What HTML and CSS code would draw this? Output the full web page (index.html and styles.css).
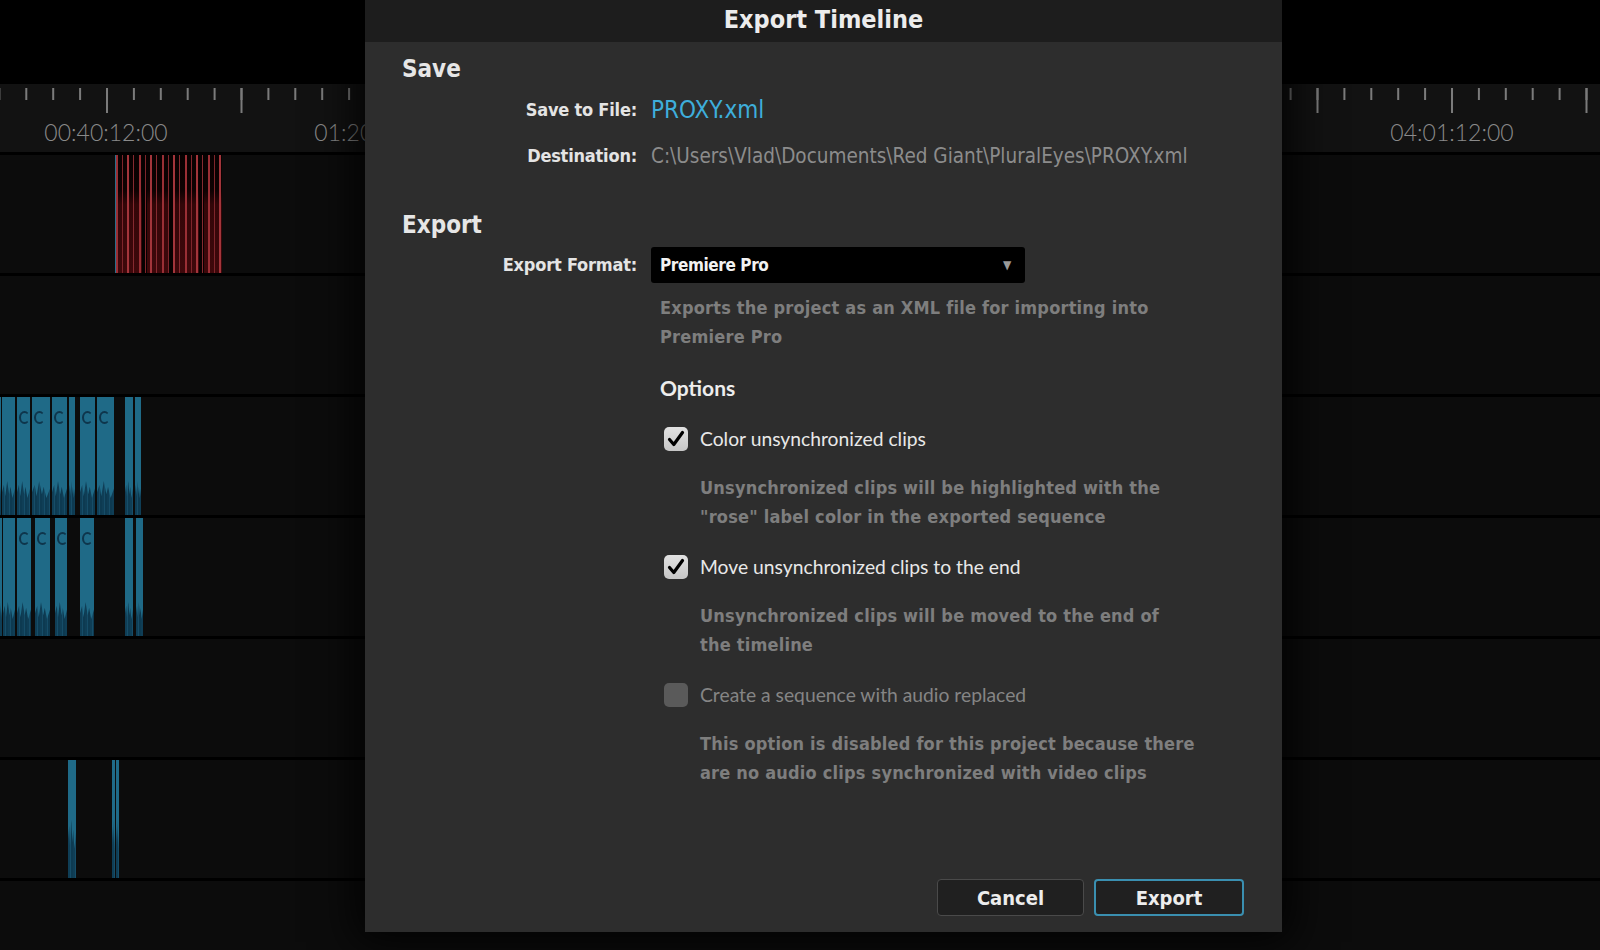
FILE: index.html
```html
<!DOCTYPE html>
<html lang="en">
<head>
    <meta charset="UTF-8">
    <title>Export Timeline</title>
    <link rel="stylesheet" href="styles.css">
</head>
<body>
    <div class="screen">
        <div class="timeline">
            <div class="topbar"></div>
            <div class="ruler">
                <svg class="ticks" width="1600" height="30">
                    <defs>
                        <pattern id="minor" x="-1.6" y="0" width="26.9" height="30" patternUnits="userSpaceOnUse">
                            <rect width="2" height="12" fill="#7b7b7b"/>
                        </pattern>
                        <pattern id="major" x="106" y="0" width="134.5" height="30" patternUnits="userSpaceOnUse">
                            <rect width="2" height="25" fill="#7b7b7b"/>
                        </pattern>
                    </defs>
                    <rect width="1600" height="30" fill="url(#minor)"/>
                    <rect width="1600" height="30" fill="url(#major)"/>
                </svg>
                <span class="timecode" style="left:106px">00:40:12:00</span>
                <span class="timecode" style="left:376px">01:20:12:00</span>
                <span class="timecode" style="left:1452px">04:01:12:00</span>
            </div>
            <div class="tracks">
                <div class="track">
                    <div class="clip red" style="left:115px;width:107px"></div>
                </div>
                <div class="track"></div>
                <div class="track">
                    <div class="clip blue" style="left:0;width:1px"></div>
                    <div class="clip blue" style="left:2px;width:13px"></div>
                    <div class="clip blue" style="left:17px;width:13px"><span class="ring"></span></div>
                    <div class="clip blue" style="left:32px;width:18px"><span class="ring"></span></div>
                    <div class="clip blue" style="left:52px;width:15px"><span class="ring"></span></div>
                    <div class="clip blue" style="left:69px;width:6px"></div>
                    <div class="clip blue" style="left:80px;width:15px"><span class="ring"></span></div>
                    <div class="clip blue" style="left:97px;width:17px"><span class="ring"></span></div>
                    <div class="clip blue" style="left:125px;width:8px"></div>
                    <div class="clip blue" style="left:135px;width:6px"></div>
                </div>
                <div class="track">
                    <div class="clip blue" style="left:0;width:2px"></div>
                    <div class="clip blue" style="left:3px;width:12px"></div>
                    <div class="clip blue" style="left:17px;width:14px"><span class="ring"></span></div>
                    <div class="clip blue" style="left:35px;width:15px"><span class="ring"></span></div>
                    <div class="clip blue" style="left:55px;width:12px"><span class="ring"></span></div>
                    <div class="clip blue" style="left:80px;width:14px"><span class="ring"></span></div>
                    <div class="clip blue" style="left:125px;width:8px"></div>
                    <div class="clip blue" style="left:136px;width:7px"></div>
                </div>
                <div class="track"></div>
                <div class="track">
                    <div class="clip blue thin" style="left:68px;width:8px"></div>
                    <div class="clip blue thin" style="left:112px;width:3px"></div>
                    <div class="clip blue thin" style="left:116px;width:3px"></div>
                </div>
                <div class="track"></div>
            </div>
        </div>

        <div class="dialog">
            <div class="dialog-title">Export Timeline</div>
            <div class="dialog-body">
                <h2 class="section-title">Save</h2>
                <div class="field file">
                    <span class="field-label">Save to File:</span>
                    <span class="file-name">PROXY.xml</span>
                </div>
                <div class="field dest">
                    <span class="field-label">Destination:</span>
                    <span class="path">C:\Users\Vlad\Documents\Red Giant\PluralEyes\PROXY.xml</span>
                </div>

                <h2 class="section-title export">Export</h2>
                <div class="field format">
                    <span class="field-label">Export Format:</span>
                    <div class="select">
                        <span>Premiere Pro</span>
                        <span class="select-arrow">&#9660;</span>
                    </div>
                </div>

                <div class="format-details">
                    <p class="hint">Exports the project as an XML file for importing into<br>Premiere Pro</p>

                    <h3 class="options-title">Options</h3>

                    <label class="option">
                        <span class="checkbox checked">
                            <svg width="24" height="24" viewBox="0 0 24 24"><path d="M5.5 12.5 L9.8 17.5 L18.5 5.5" fill="none" stroke="#000" stroke-width="3.2" stroke-linecap="round" stroke-linejoin="round"/></svg>
                        </span>
                        <span class="option-label">Color unsynchronized clips</span>
                    </label>
                    <p class="hint option-hint">Unsynchronized clips will be highlighted with the<br>"rose" label color in the exported sequence</p>

                    <label class="option">
                        <span class="checkbox checked">
                            <svg width="24" height="24" viewBox="0 0 24 24"><path d="M5.5 12.5 L9.8 17.5 L18.5 5.5" fill="none" stroke="#000" stroke-width="3.2" stroke-linecap="round" stroke-linejoin="round"/></svg>
                        </span>
                        <span class="option-label">Move unsynchronized clips to the end</span>
                    </label>
                    <p class="hint option-hint">Unsynchronized clips will be moved to the end of<br>the timeline</p>

                    <label class="option disabled">
                        <span class="checkbox"></span>
                        <span class="option-label">Create a sequence with audio replaced</span>
                    </label>
                    <p class="hint option-hint">This option is disabled for this project because there<br>are no audio clips synchronized with video clips</p>
                </div>

                <div class="actions">
                    <button type="button" class="btn btn-cancel">Cancel</button>
                    <button type="button" class="btn btn-export">Export</button>
                </div>
            </div>
        </div>
    </div>
</body>
</html>
```

FILE: styles.css
```css
* {
    margin: 0;
    padding: 0;
    box-sizing: border-box;
}

body {
    background: #000;
    width: 1600px;
    height: 950px;
    overflow: hidden;
    font-family: "Liberation Sans Narrow", "DejaVu Sans Condensed", sans-serif;
}

.screen {
    position: relative;
    width: 1600px;
    height: 950px;
    overflow: hidden;
}

/* timeline behind the dialog */

.topbar {
    height: 84px;
    background: #000;
}

.ruler {
    position: relative;
    height: 68px;
    padding-top: 4px;
    background: #121212;
}

.ruler .ticks {
    display: block;
}

.timecode {
    position: absolute;
    top: 34px;
    transform: translateX(-50%);
    font-family: Lato, sans-serif;
    font-weight: 300;
    font-size: 23px;
    color: #8a8a8a;
    white-space: nowrap;
}

.tracks {
    height: 798px;
    overflow: hidden;
}

.track {
    position: relative;
    height: 121px;
    border-top: 3px solid #000;
    background: #0c0c0c;
}

.clip {
    position: absolute;
    top: 0;
    bottom: 0;
}

.clip.red {
    border-left: 1px solid #2a6f8c;
    background:
        repeating-linear-gradient(90deg, #9a2f35 0 2px, transparent 2px 6px, #7e252b 6px 7px, transparent 7px 11px, #a3353b 11px 13px, transparent 13px 17px, #862a30 17px 18px, transparent 18px 23px),
        repeating-linear-gradient(90deg, transparent 0 26px, #060101 26px 31px, transparent 31px 53px, #080101 53px 57px),
        linear-gradient(to bottom, #080101 0, #0e0202 30%, #330608 42%, #3e080b 100%);
}

.clip.blue {
    background: #1f6a87;
    overflow: hidden;
}

.clip.blue::after {
    content: "";
    position: absolute;
    left: 0;
    right: 0;
    bottom: 0;
    height: 32%;
    background: repeating-linear-gradient(90deg, #0f3e56 0 2px, #164d68 2px 3px, #0d3a51 3px 5px);
    clip-path: polygon(0 40%, 15% 20%, 25% 50%, 40% 10%, 55% 45%, 65% 25%, 80% 55%, 100% 30%, 100% 100%, 0 100%);
}

.clip.thin::after {
    height: 55%;
}

.ring {
    position: absolute;
    top: 14px;
    left: 2px;
    width: 11px;
    height: 13px;
    border: 2px solid #0e354b;
    border-right-color: transparent;
    border-radius: 50%;
}

/* export dialog */

.dialog {
    position: absolute;
    left: 365px;
    top: 0;
    width: 917px;
    height: 932px;
    display: flex;
    flex-direction: column;
    background: #2d2d2d;
    box-shadow: 0 0 40px 10px rgba(0, 0, 0, 0.85);
}

.dialog-title {
    height: 42px;
    line-height: 40px;
    background: #1d1d1d;
    text-align: center;
    font-weight: bold;
    font-size: 25px;
    color: #ececec;
}

.dialog-body {
    flex: 1;
    display: flex;
    flex-direction: column;
    padding: 12px 38px 16px 37px;
}

.section-title {
    font-size: 24px;
    line-height: 30px;
    font-weight: bold;
    color: #e6e6e6;
}

.section-title.export {
    margin-top: 39px;
}

.field {
    display: grid;
    grid-template-columns: 235px 1fr;
    column-gap: 14px;
    align-items: center;
    line-height: 30px;
}

.field.file {
    margin-top: 11px;
}

.field.dest {
    margin-top: 16px;
}

.field.format {
    margin-top: 7px;
}

.field-label {
    text-align: right;
    font-weight: bold;
    font-size: 18px;
    letter-spacing: -0.2px;
    color: #e4e4e4;
}

.file-name {
    font-size: 24px;
    color: #3eaedb;
}

.path {
    font-size: 20.5px;
    color: #8c8c8c;
}

.select {
    width: 374px;
    height: 36px;
    display: flex;
    align-items: center;
    justify-content: space-between;
    padding: 0 14px 0 9px;
    background: #000;
    border-radius: 3px;
    font-weight: bold;
    font-size: 17px;
    letter-spacing: -0.4px;
    color: #f2f2f2;
}

.select-arrow {
    font-size: 12px;
    color: #9a9a9a;
}

.format-details {
    margin-left: 258px;
}

.hint {
    margin-top: 11px;
    font-weight: bold;
    font-size: 18px;
    line-height: 28.5px;
    letter-spacing: 0.2px;
    white-space: nowrap;
    color: #7e7e7e;
}

.options-title {
    margin-top: 22px;
    font-family: Lato, sans-serif;
    font-size: 21px;
    line-height: 30px;
    font-weight: bold;
    color: #ededed;
}

.option {
    display: flex;
    align-items: center;
    gap: 12px;
    margin-top: 21px;
    margin-left: 4px;
    line-height: 30px;
}

.option-hint {
    margin-top: 20px;
    margin-left: 40px;
}

.checkbox {
    width: 24px;
    height: 24px;
    flex-shrink: 0;
    border-radius: 5px;
    background: linear-gradient(#e2e2e2, #c6c6c6);
}

.checkbox svg {
    display: block;
}

.option.disabled .checkbox {
    background: #5a5a5a;
}

.option-label {
    font-family: Lato, sans-serif;
    font-size: 19.3px;
    color: #e8e8e8;
}

.option.disabled .option-label {
    color: #858585;
}

.actions {
    margin-top: auto;
    display: flex;
    justify-content: flex-end;
    gap: 10px;
}

.btn {
    height: 37px;
    border-radius: 4px;
    font-family: inherit;
    font-weight: bold;
    font-size: 20px;
    color: #ededed;
    background: #202020;
    cursor: pointer;
}

.btn-cancel {
    width: 147px;
    border: 1.5px solid #4a4a4a;
}

.btn-export {
    width: 150px;
    border: 2px solid #3a8fb0;
}
```
